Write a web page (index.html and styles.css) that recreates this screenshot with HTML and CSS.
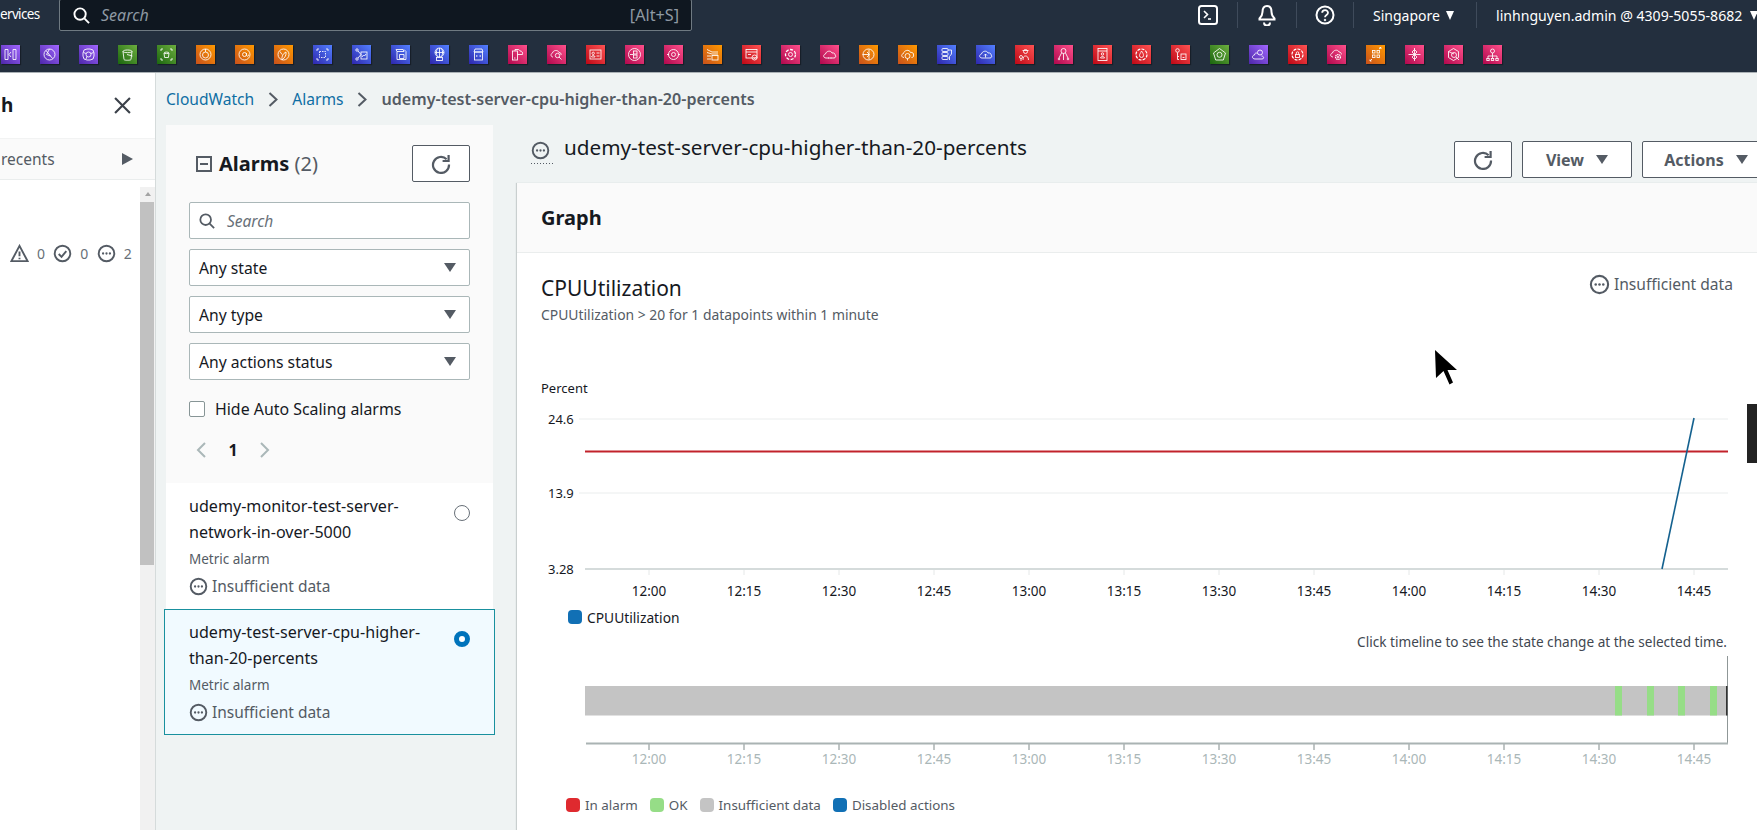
FILE: index.html
```html
<!DOCTYPE html>
<html lang="en">
<head>
<meta charset="utf-8">
<title>CloudWatch Alarms</title>
<link rel="stylesheet" href="styles.css">
</head>
<body>
<svg class="defs" width="0" height="0" aria-hidden="true">
  <symbol id="dots" viewBox="0 0 20 20">
    <circle cx="10" cy="10" r="8.2" fill="none" stroke="currentColor" stroke-width="2"/>
    <circle cx="6.4" cy="10" r="1.2" fill="currentColor"/><circle cx="10" cy="10" r="1.2" fill="currentColor"/><circle cx="13.6" cy="10" r="1.2" fill="currentColor"/>
  </symbol>
  <symbol id="refresh" viewBox="0 0 20 20">
    <path d="M15.6 5.2A8 8 0 1 0 18 10.5" fill="none" stroke="currentColor" stroke-width="2.2"/>
    <path d="M17.6 1v6h-6" fill="none" stroke="currentColor" stroke-width="2.2"/>
  </symbol>
  <symbol id="mag" viewBox="0 0 18 18">
    <circle cx="7.5" cy="7.5" r="6" fill="none" stroke="currentColor" stroke-width="2"/>
    <path d="M12 12l5 5" stroke="currentColor" stroke-width="2"/>
  </symbol>
</svg>

<header class="topnav">
  <div class="nav-row">
    <div class="services"><span>ervices</span></div>
    <div class="nav-search">
      <svg class="nav-mag"><use href="#mag"/></svg>
      <span class="nav-search-text">Search</span>
      <span class="nav-shortcut">[Alt+S]</span>
    </div>
    <div class="nav-item nav-shell">
      <svg width="20" height="20" viewBox="0 0 20 20" fill="none" stroke="#fff" stroke-width="2"><rect x="1" y="1" width="18" height="18" rx="2.5"/><path d="M6 6l3.5 3.5L6 13" stroke-width="1.6"/><path d="M10 14h3" stroke-width="1.6"/></svg>
    </div>
    <div class="nav-item nav-bell">
      <svg width="20" height="22" viewBox="0 0 20 22" fill="none" stroke="#fff" stroke-width="2"><path d="M10 2c-3.500 0-4.500 3-4.500 6 0 3.500-1.500 5-3 6.500v1h15v-1c-1.500-1.500-3-3-3-6.500 0-3-1-6-4.500-6z"/><path d="M7 18.500a3 3 0 0 0 6 0"/></svg>
    </div>
    <div class="nav-item nav-help">
      <svg width="20" height="20" viewBox="0 0 20 20" fill="none" stroke="#fff" stroke-width="2"><circle cx="10" cy="10" r="8.500"/><path d="M7.200 7.800c0-3.500 5.800-3.500 5.800 0 0 2.200-3 2.200-3 4.500" stroke-width="1.800"/><circle cx="10" cy="15" r=".8" fill="#fff" stroke-width="1"/></svg>
    </div>
    <div class="nav-item nav-region"><span>Singapore</span><i class="caret-w"></i></div>
    <div class="nav-item nav-user"><span>linhnguyen.admin @ 4309-5055-8682</span><i class="caret-w"></i></div>
  </div>
  <div class="fav-row">
    <svg class="svc purple" viewBox="0 0 19 19"><path d="M4 4.500h3v10H4zM15 4.500h-3v10h3zM10 7L8 9.500l2 2.500"/></svg>
    <svg class="svc purple" viewBox="0 0 19 19"><circle cx="9.500" cy="9.500" r="5.500"/><path d="M6 5.500l6.500 8M9.500 4l-3 5.500 4 1.500"/></svg>
    <svg class="svc purple" viewBox="0 0 19 19"><rect x="4" y="4" width="11" height="11" rx="4"/><circle cx="9.500" cy="9.500" r="2.500"/><path d="M4.500 7.500l2.500 1M14.500 7.500l-2.500 1M7 14l1-2.500"/></svg>
    <svg class="svc green" viewBox="0 0 19 19"><path d="M5 6.500c0-2 9-2 9 0l-1 8c-.3 1-6.700 1-7 0zM5 6.500c0 1.500 9 1.500 9 0M9 9.500l5.500 1.500"/></svg>
    <svg class="svc green" viewBox="0 0 19 19"><path d="M4 6V4h2M13 4h2v2M15 13v2h-2M6 15H4v-2M7 8c0-1.200 5-1.200 5 0l-.6 4.500H7.600zM7 8c0 .8 5 .8 5 0"/></svg>
    <svg class="svc orange" viewBox="0 0 19 19"><circle cx="9.500" cy="9.500" r="5.500"/><circle cx="9.500" cy="10" r="3"/><path d="M9.500 4v3"/></svg>
    <svg class="svc orange" viewBox="0 0 19 19"><circle cx="9.500" cy="9.500" r="5.500"/><circle cx="9.500" cy="9.500" r="2"/><path d="M11.500 8v2c0 2 2.500 1.500 2.200-.5"/></svg>
    <svg class="svc orange" viewBox="0 0 19 19"><circle cx="9.500" cy="9.500" r="5.500"/><path d="M8 15c-.5-4 1-6.500 4-8 .5 3-1 5.500-4 8zM6 6.500l2 3"/></svg>
    <svg class="svc blue" viewBox="0 0 19 19"><path d="M4 6V4h2M13 4h2v2M15 13v2h-2M6 15H4v-2"/><rect x="6.500" y="6.500" width="6" height="6" stroke-dasharray="1.500 1"/></svg>
    <svg class="svc blue" viewBox="0 0 19 19"><circle cx="5" cy="5" r="1.200"/><circle cx="5" cy="14" r="1.200"/><path d="M6 6l3 3.500-3 3.500"/><rect x="9" y="7" width="6" height="7"/><path d="M10 12l1.500-2 1 1 1.500-2"/></svg>
    <svg class="svc blue" viewBox="0 0 19 19"><path d="M5 4.500h7l1 2H6zM6 6.500v8h9v-8M8.500 9.500h4.500v4H8.500zM13 4.500l2 2"/></svg>
    <svg class="svc blue" viewBox="0 0 19 19"><circle cx="9.500" cy="7.500" r="4.500"/><path d="M5 7.500h9M9.500 3v9M7.500 3.500c-1.500 2.500-1.500 5.500 0 8M11.500 3.500c1.500 2.500 1.500 5.500 0 8"/><rect x="6.500" y="12.500" width="6" height="3"/></svg>
    <svg class="svc blue" viewBox="0 0 19 19"><path d="M5 7l1-3h7l1 3z"/><rect x="5.500" y="7" width="8" height="8"/><path d="M8.300 10l-1 1 1 1M10.700 10l1 1-1 1"/></svg>
    <svg class="svc pink" viewBox="0 0 19 19"><rect x="4.500" y="6" width="5" height="9"/><path d="M7 6V4.500h3c1 0 1.500.5 2 1.500 2 0 3 1.500 2.500 3.500H9.500M6 13h1.500"/></svg>
    <svg class="svc pink" viewBox="0 0 19 19"><path d="M6 12c-2.500 0-2.500-3.500-.5-4 .5-3 5.500-3.500 6.500-.5 1.500 0 2.500 1 2 2.500"/><circle cx="10.500" cy="10.500" r="2.200"/><path d="M12 12l2.500 2.500"/></svg>
    <svg class="svc red" viewBox="0 0 19 19"><rect x="4" y="5" width="11" height="9"/><circle cx="7.200" cy="8.300" r="1.200"/><path d="M5.500 12c0-2 3.500-2 3.500 0zM10.500 8h3M10.500 11h3"/></svg>
    <svg class="svc pink" viewBox="0 0 19 19"><circle cx="9.500" cy="9.500" r="6"/><rect x="8.500" y="6" width="3.500" height="3"/><rect x="8.500" y="10" width="3.500" height="3"/><path d="M5 9.500h3.500"/></svg>
    <svg class="svc pink" viewBox="0 0 19 19"><circle cx="9.500" cy="9.500" r="5"/><circle cx="9.500" cy="9.500" r="2"/><path d="M3 9.500h2M14 9.500h2"/></svg>
    <svg class="svc orange" viewBox="0 0 19 19"><path d="M4 4.500l5 2.500h6M4 7.500L9 9h6M4 11h4"/><rect x="9" y="10.500" width="6" height="4.500"/><path d="M4 14h4"/></svg>
    <svg class="svc red" viewBox="0 0 19 19"><rect x="4" y="4.500" width="11" height="8.500"/><path d="M4 7h11M6 9.500h3"/><circle cx="12.500" cy="12.500" r="2.500"/><path d="M11.500 12.500l1 1 1-1.500"/></svg>
    <svg class="svc pink" viewBox="0 0 19 19"><circle cx="9.500" cy="9.500" r="5" stroke-dasharray="3 1.500" stroke-width="1.300"/><circle cx="9.500" cy="9.500" r="2"/></svg>
    <svg class="svc pink" viewBox="0 0 19 19"><path d="M6 13c-3 0-3-3.500-.5-4 .5-3 5.500-4 6.500-1 2-.5 3.500 1 3 2 1.500 1 .5 3-1 3zM8 13h1M10.500 13h1"/></svg>
    <svg class="svc orange" viewBox="0 0 19 19"><circle cx="9.500" cy="9.500" r="5.500"/><path d="M3.500 9.500h6.500M8 7l2.500 2.500L8 12M10 4.500v10"/></svg>
    <svg class="svc orange" viewBox="0 0 19 19"><path d="M6 12.500c-3 0-3-3.500-.5-4 .5-3.500 6-4.500 7-1 2-.5 3.500 1 3 2.500.5 1.500-.5 2.500-2 2.500"/><circle cx="9.500" cy="11" r="2.500"/><path d="M9.500 13.500v2"/></svg>
    <svg class="svc blue" viewBox="0 0 19 19"><rect x="5" y="3.500" width="6" height="3" rx="1"/><rect x="5" y="7.500" width="6" height="3" rx="1"/><rect x="5" y="11.500" width="6" height="3" rx="1"/><path d="M11 5h3.500v4l-2 2.500V15"/></svg>
    <svg class="svc blue" viewBox="0 0 19 19"><path d="M6 13c-3 0-3-3.500-.5-4 .5-3 5.500-4 6.500-1 2-.5 3.500 1 3 2 1.500 1 .5 3-1 3zM9.500 12.500V9M8 10.500L9.500 9l1.500 1.500"/></svg>
    <svg class="svc red" viewBox="0 0 19 19"><circle cx="10.500" cy="6.500" r="2"/><path d="M7.500 5.500h6M8 15c0-3 1-4 2.500-4s3 1 3 4"/><circle cx="6" cy="12" r="1.500"/><path d="M6 13.500V16"/></svg>
    <svg class="svc pink" viewBox="0 0 19 19"><circle cx="9.500" cy="6" r="2.500"/><path d="M7.500 8L5 13M9.500 8.500V15M11.500 8l2.500 5"/><circle cx="5" cy="14" r=".8"/><circle cx="14" cy="14" r=".8"/></svg>
    <svg class="svc red" viewBox="0 0 19 19"><rect x="5" y="3.500" width="9" height="12"/><path d="M5 6h9"/><circle cx="9.500" cy="9" r="1.200"/><path d="M7.500 13c0-2 4-2 4 0z"/></svg>
    <svg class="svc red" viewBox="0 0 19 19"><circle cx="9.500" cy="9.500" r="5.500" stroke-dasharray="3 1.200" stroke-width="1.200"/><path d="M9.500 6c1.500 2 2 3 2 4.500a2 2 0 0 1-4 0C7.500 9 8.500 8.500 9.500 6z"/></svg>
    <svg class="svc red" viewBox="0 0 19 19"><circle cx="6.500" cy="5.500" r="1.800"/><path d="M6.500 7.500v7H8M6.500 11.500H8"/><rect x="10" y="9" width="5" height="5.500"/><path d="M11.500 12.500h2"/></svg>
    <svg class="svc green" viewBox="0 0 19 19"><path d="M9.500 3.500l6 4.500-2.200 7H5.700L3.500 8z"/><circle cx="9.500" cy="9.800" r="2.500"/></svg>
    <svg class="svc purple" viewBox="0 0 19 19"><path d="M6 14c-3 0-3.500-3.500-.5-4 0-2 2-2.500 3-1.500M12.500 11c2.500 0 3 3 .5 3H6"/><circle cx="11" cy="7.500" r="2.500"/></svg>
    <svg class="svc red" viewBox="0 0 19 19"><circle cx="9.500" cy="9.500" r="5.500" stroke-dasharray="3 1.200" stroke-width="1.200"/><rect x="7.500" y="9.500" width="4" height="3"/><path d="M8.300 9.500V8a1.200 1.200 0 0 1 2.400 0v1.500"/></svg>
    <svg class="svc pink" viewBox="0 0 19 19"><path d="M6 12c-3 0-3-3.500-.5-4 .5-3 5.500-4 6.500-1 1.500 0 2.500 1 2.300 2.500"/><circle cx="11" cy="12" r="2.500" stroke-dasharray="1.500 .6" stroke-width="1.200"/><circle cx="11" cy="12" r=".8"/></svg>
    <svg class="svc orange" viewBox="0 0 19 19"><rect x="6.500" y="5.500" width="2.500" height="2.500"/><rect x="11" y="5.500" width="2.500" height="2.500"/><rect x="6.500" y="10" width="2.500" height="2.500"/><rect x="11" y="10" width="2.500" height="2.500"/><path d="M13 4l2-1.500M13.500 2.500H15V4M6 14l-2 2M4 14.500V16h1.500"/></svg>
    <svg class="svc pink" viewBox="0 0 19 19"><path d="M9.500 3v13M3.500 9.500h12"/><path d="M9.500 4.500l2.500 2.500-2.500 2.500L7 7zM9.500 9.500l2.500 2.500-2.500 2.500L7 12z"/></svg>
    <svg class="svc pink" viewBox="0 0 19 19"><path d="M9.500 3.500l5 3v6l-5 3-5-3v-6z"/><circle cx="10" cy="10" r="2.500"/><path d="M4.500 6.500L10 9M12 12l3 3"/></svg>
    <svg class="svc pink" viewBox="0 0 19 19"><circle cx="9.500" cy="6" r="2"/><path d="M9.500 8v5M5 13.500V11h9v2.500"/><rect x="3.800" y="13.500" width="2.400" height="2"/><rect x="8.300" y="13.500" width="2.400" height="2"/><rect x="12.800" y="13.500" width="2.400" height="2"/></svg>
  </div>
</header>

<div class="page">
  <aside class="side">
    <div class="side-head">
      <span class="side-title">h</span>
      <svg class="side-close" width="17" height="17" viewBox="0 0 16 16" fill="none" stroke="#3b4149" stroke-width="2"><path d="M1 1l14 14M15 1L1 15"/></svg>
    </div>
    <div class="side-recents">
      <span>recents</span>
      <i class="caret-r"></i>
    </div>
    <div class="side-body">
      <div class="side-content">
        <div class="counts">
          <svg class="count-ico" viewBox="0 0 20 20" fill="none" stroke="currentColor" stroke-width="2"><path d="M10 2L1.500 18h17z"/><path d="M10 8v5M10 14.500v1.500"/></svg><span class="count-num">0</span>
          <svg class="count-ico" viewBox="0 0 20 20" fill="none" stroke="currentColor" stroke-width="2"><circle cx="10" cy="10" r="8.200"/><path d="M6 10.500l3 3 5-6"/></svg><span class="count-num">0</span>
          <svg class="count-ico"><use href="#dots"/></svg><span class="count-num">2</span>
        </div>
      </div>
      <div class="scrollbar">
        <div class="scroll-up"><i></i></div>
        <div class="scroll-thumb"></div>
      </div>
    </div>
  </aside>

  <main class="main">
    <nav class="crumbs">
      <a class="crumb-link">CloudWatch</a>
      <svg class="crumb-sep" viewBox="0 0 10 16" fill="none" stroke="#545b64" stroke-width="2"><path d="M1.500 1.500L8.500 8l-7 6.500"/></svg>
      <a class="crumb-link">Alarms</a>
      <svg class="crumb-sep" viewBox="0 0 10 16" fill="none" stroke="#545b64" stroke-width="2"><path d="M1.500 1.500L8.500 8l-7 6.500"/></svg>
      <span class="crumb-cur">udemy-test-server-cpu-higher-than-20-percents</span>
    </nav>
    <div class="columns">
      <section class="alarms">
        <div class="filters">
          <div class="alarms-head">
            <svg class="collapse" width="16" height="16" viewBox="0 0 16 16" fill="none" stroke="#545b64" stroke-width="2"><rect x="1" y="1" width="14" height="14"/><path d="M4 8h8"/></svg>
            <h2 class="alarms-title">Alarms <span class="alarms-count">(2)</span></h2>
            <button class="btn btn-refresh"><svg width="20" height="20"><use href="#refresh"/></svg></button>
          </div>
          <div class="field field-search"><svg class="field-mag"><use href="#mag"/></svg><span>Search</span></div>
          <div class="field sel-state"><span>Any state</span><i class="caret-g"></i></div>
          <div class="field sel-type"><span>Any type</span><i class="caret-g"></i></div>
          <div class="field sel-actions"><span>Any actions status</span><i class="caret-g"></i></div>
          <label class="hide-row"><i class="checkbox"></i><span>Hide Auto Scaling alarms</span></label>
          <div class="pager">
            <svg width="10" height="16" viewBox="0 0 10 16" fill="none" stroke="#aab7b8" stroke-width="2"><path d="M9 1L2 8l7 7"/></svg>
            <b>1</b>
            <svg width="10" height="16" viewBox="0 0 10 16" fill="none" stroke="#aab7b8" stroke-width="2"><path d="M1 1l7 7-7 7"/></svg>
          </div>
        </div>
        <article class="alarm">
          <div class="alarm-text">
            <div class="alarm-name">udemy-monitor-test-server-<br>network-in-over-5000</div>
            <div class="alarm-type">Metric alarm</div>
            <div class="alarm-state"><svg width="19" height="19"><use href="#dots"/></svg>Insufficient data</div>
          </div>
          <i class="radio"></i>
        </article>
        <article class="alarm alarm-on">
          <div class="alarm-text">
            <div class="alarm-name">udemy-test-server-cpu-higher-<br>than-20-percents</div>
            <div class="alarm-type">Metric alarm</div>
            <div class="alarm-state"><svg width="19" height="19"><use href="#dots"/></svg>Insufficient data</div>
          </div>
          <i class="radio radio-on"></i>
        </article>
      </section>

      <section class="detail">
        <div class="detail-head">
          <span class="detail-ico"><svg width="19" height="19"><use href="#dots"/></svg></span>
          <h1 class="detail-title">udemy-test-server-cpu-higher-than-20-percents</h1>
          <div class="detail-btns">
            <button class="btn btn-refresh"><svg width="20" height="20"><use href="#refresh"/></svg></button>
            <button class="btn btn-view">View<i class="caret-g"></i></button>
            <button class="btn btn-actions">Actions<i class="caret-g"></i></button>
          </div>
        </div>
        <div class="panel">
          <div class="panel-head">Graph</div>
          <div class="panel-body">
            <div class="graph-head">
              <div>
                <div class="graph-title">CPUUtilization</div>
                <div class="graph-sub">CPUUtilization &gt; 20 for 1 datapoints within 1 minute</div>
              </div>
              <div class="graph-status"><svg width="21" height="21"><use href="#dots"/></svg>Insufficient data</div>
            </div>
            <svg class="plot" width="1192" height="228" viewBox="541 378 1192 228">
              <text class="ax" x="541" y="392.500">Percent</text>
              <text class="ax" x="548" y="424">24.6</text>
              <text class="ax" x="548" y="498">13.9</text>
              <text class="ax" x="548" y="574">3.28</text>
              <path d="M579 419h1149M579 493h1149" stroke="#eaeded"/>
              <path d="M585 569h1143" stroke="#d5dbdb" stroke-width="2"/>
              <path d="M649 570v5M744 570v5M839 570v5M934 570v5M1029 570v5M1124 570v5M1219 570v5M1314 570v5M1409 570v5M1504 570v5M1599 570v5M1694 570v5" stroke="#e5e8e8"/>
              <path d="M585 451.500h1143" stroke="#c2222b" stroke-width="2"/>
              <path d="M1662 569L1694 418" stroke="#14618f" stroke-width="1.600" fill="none"/>
              <g class="ticks">
                <text x="649" y="596">12:00</text><text x="744" y="596">12:15</text><text x="839" y="596">12:30</text><text x="934" y="596">12:45</text><text x="1029" y="596">13:00</text><text x="1124" y="596">13:15</text><text x="1219" y="596">13:30</text><text x="1314" y="596">13:45</text><text x="1409" y="596">14:00</text><text x="1504" y="596">14:15</text><text x="1599" y="596">14:30</text><text x="1694" y="596">14:45</text>
              </g>
            </svg>
            <div class="legend legend-metric"><span class="legend-item"><i class="sw sw-blue"></i>CPUUtilization</span></div>
            <div class="caption">Click timeline to see the state change at the selected time.</div>
            <svg class="timeline" width="1192" height="116" viewBox="541 654 1192 116">
              <path d="M1727.500 656v88" stroke="#8f9797"/>
              <rect x="585" y="686" width="1142" height="29.500" fill="#c4c4c4"/>
              <rect x="1615" y="686" width="7" height="29.500" fill="#96dd87"/>
              <rect x="1647" y="686" width="7" height="29.500" fill="#96dd87"/>
              <rect x="1678" y="686" width="7" height="29.500" fill="#96dd87"/>
              <rect x="1710" y="686" width="7" height="29.500" fill="#96dd87"/>
              <rect x="1726" y="686" width="1.500" height="29.500" fill="#333"/>
              <path d="M586 743.500h1142" stroke="#aab3b3" stroke-width="2"/>
              <path d="M649 744v6M744 744v6M839 744v6M934 744v6M1029 744v6M1124 744v6M1219 744v6M1314 744v6M1409 744v6M1504 744v6M1599 744v6M1694 744v6" stroke="#aab3b3" stroke-width="1.500"/>
              <g class="ticks ticks-dim">
                <text x="649" y="764">12:00</text><text x="744" y="764">12:15</text><text x="839" y="764">12:30</text><text x="934" y="764">12:45</text><text x="1029" y="764">13:00</text><text x="1124" y="764">13:15</text><text x="1219" y="764">13:30</text><text x="1314" y="764">13:45</text><text x="1409" y="764">14:00</text><text x="1504" y="764">14:15</text><text x="1599" y="764">14:30</text><text x="1694" y="764">14:45</text>
              </g>
            </svg>
            <div class="legend legend-states">
              <span class="legend-item"><i class="sw sw-red"></i>In alarm</span>
              <span class="legend-item"><i class="sw sw-green"></i>OK</span>
              <span class="legend-item"><i class="sw sw-gray"></i>Insufficient data</span>
              <span class="legend-item"><i class="sw sw-blue"></i>Disabled actions</span>
            </div>
          </div>
        </div>
      </section>
    </div>
  </main>
</div>

<div class="edge-tab"></div>
<svg class="cursor" width="24" height="36" viewBox="0 0 24 36"><path d="M0 0l1 28 7.500-7 6 13.500 3.500-2-5.500-12.500H22z" fill="#000"/></svg>
</body>
</html>
```
FILE: styles.css
```css
* { box-sizing: border-box; }
html, body { margin: 0; width: 1757px; height: 830px; overflow: hidden; }
body { font-family: "Noto Sans", "Open Sans", sans-serif; color: #16191f; background: #eff3f3; position: relative; font-size: 15px; }
.defs { position: absolute; }
i { display: block; font-style: normal; }
h1, h2 { margin: 0; font-weight: 400; }

/* top navigation */
.topnav { height: 73px; background: #232f3e; border-bottom: 1px solid #aab1b5; overflow: hidden; }
.nav-row { display: flex; height: 32px; color: #fff; font-size: 14px; width: 1790px; }
.services { width: 40px; display: flex; align-items: center; height: 28px; flex: none; font-size: 13.500px; letter-spacing: -.65px; }
.services span { white-space: nowrap; }
.nav-search { flex: none; width: 633px; height: 32px; margin: -1px 0 0 19px; background: #0f1720; border: 1px solid #6f7a82; border-radius: 2px; display: flex; align-items: center; padding: 0 12px 0 13px; color: #fff; }
.nav-mag { width: 17px; height: 17px; color: #fff; }
.nav-search-text { margin-left: 11px; font-style: italic; color: #8e99a3; font-size: 16px; }
.nav-shortcut { margin-left: auto; color: #8e99a3; font-size: 16.200px; }
.nav-item { height: 26px; margin-top: 2px; display: flex; align-items: center; flex: none; border-left: 1px solid #3f4b5b; }
.nav-shell { border-left: 0; margin-left: 506px; padding-right: 19px; }
.nav-bell, .nav-help { justify-content: center; }
.nav-bell { width: 59px; }
.nav-help { width: 57px; }
.nav-region { width: 123px; padding-left: 19px; }
.nav-region .caret-w { margin-left: 6px; }
.nav-user { padding-left: 19px; font-size: 14.100px; }
.nav-item span { white-space: nowrap; }
.caret-w { width: 0; height: 0; border-left: 4.500px solid transparent; border-right: 4.500px solid transparent; border-top: 9px solid #fff; margin-left: 8px; }

.fav-row { display: flex; gap: 20px; padding: 13px 0 0 1px; width: 1600px; }
.svc { width: 19px; height: 19px; flex: none; fill: none; stroke: #fff; stroke-width: .85; box-shadow: 1px 1px 1px #0005; }
.purple { background: linear-gradient(45deg, #4d27aa, #a166ff); }
.green { background: linear-gradient(45deg, #1b660f, #6cae3e); }
.orange { background: linear-gradient(45deg, #c8511b, #ff9900); }
.blue { background: linear-gradient(45deg, #2e27ad, #527fff); }
.pink { background: linear-gradient(45deg, #b0084d, #ff4f8b); }
.red { background: linear-gradient(45deg, #bd0816, #ff5252); }

/* layout */
.page { display: flex; height: 757px; }

/* sidebar */
.side { width: 156px; flex: none; background: #fff; border-right: 1px solid #d5dbdb; display: flex; flex-direction: column; overflow: hidden; }
.side-head { height: 65px; display: flex; align-items: center; justify-content: space-between; padding: 0 24px 1px 1px; }
.side-title { font-size: 19px; font-weight: 700; }
.side-recents { height: 42px; background: #fafafa; border-top: 1px solid #f2f3f3; border-bottom: 1px solid #eaeded; display: flex; align-items: center; justify-content: space-between; padding: 0 22px 0 1px; color: #545b64; font-size: 15.500px; }
.caret-r { width: 0; height: 0; border-top: 6px solid transparent; border-bottom: 6px solid transparent; border-left: 11px solid #545b64; }
.side-body { flex: 1; display: flex; min-height: 0; }
.side-content { width: 140px; flex: none; }
.counts { display: flex; align-items: center; padding: 64px 0 0 10px; color: #545b64; font-size: 14px; }
.count-ico { width: 19px; height: 19px; flex: none; }
.count-num { width: 25px; padding-left: 8px; color: #687078; }
.scrollbar { width: 15px; margin-top: 7px; background: #f1f1f1; }
.scroll-up { height: 15px; display: flex; justify-content: center; padding-top: 5px; }
.scroll-up i { width: 0; height: 0; border-left: 3.500px solid transparent; border-right: 3.500px solid transparent; border-bottom: 4px solid #a3a3a3; }
.scroll-thumb { height: 363px; width: 14px; background: #c1c1c1; }

/* main */
.main { flex: none; width: 1606px; display: flex; flex-direction: column; }
.crumbs { height: 52px; flex: none; display: flex; align-items: center; padding: 0 0 0 10px; font-size: 15.600px; }
.crumb-link { color: #0e6ea3; }
.crumb-sep { width: 10px; height: 17px; margin: 0 14px 0 14px; }
.crumb-cur { color: #545b64; font-weight: 600; font-size: 16.100px; }
.columns { display: flex; }

.alarms { width: 331px; flex: none; margin-left: 8px; }
.filters { margin: 0 2px; height: 358px; background: #fafafa; padding: 20px 23px 0; }
.alarms-head { display: flex; align-items: center; height: 37px; }
.collapse { margin-left: 7px; flex: none; }
.alarms-title { margin-left: 7px; font-size: 20px; font-weight: 700; }
.alarms-count { color: #545b64; font-weight: 400; }
.btn { font-family: inherit; background: #fff; border: 1px solid #545b64; border-radius: 2px; height: 37px; color: #545b64; font-weight: 700; font-size: 16px; display: flex; align-items: center; justify-content: center; padding: 0; }
.btn-refresh { width: 58px; flex: none; color: #545b64; }
.alarms-head .btn { margin-left: auto; }
.field { display: flex; align-items: center; height: 37px; background: #fff; border: 1px solid #aab7b8; border-radius: 2px; padding: 0 13px 0 9px; font-size: 15.700px; }
.field-search { margin-top: 20px; color: #687078; font-style: italic; font-size: 15.500px; }
.field-mag { width: 16px; height: 16px; color: #545b64; margin-right: 12px; }
.sel-state { margin-top: 10px; }
.sel-type { margin-top: 10px; }
.sel-actions { margin-top: 10px; }
.caret-g { width: 0; height: 0; border-left: 6px solid transparent; border-right: 6px solid transparent; border-top: 9px solid #545b64; margin-left: auto; }
.hide-row { display: flex; align-items: center; margin-top: 20px; font-size: 15.900px; height: 18px; }
.checkbox { width: 16px; height: 16px; background: #fff; border: 1px solid #879596; border-radius: 2px; margin-right: 10px; }
.pager { display: flex; align-items: center; height: 20px; margin-top: 22px; padding-left: 7px; }
.pager b { width: 54px; text-align: center; font-size: 16px; }

.alarm { display: flex; height: 126px; background: #fff; margin: 0 2px; padding: 10px 23px 0; }
.alarm-on { margin: 0; padding: 9px 24px 0 24px; background: #f1faff; border: 1px solid #19909e; }
.alarm-text { flex: 1; min-width: 0; }
.alarm-name { font-size: 16.100px; line-height: 26px; white-space: nowrap; }
.alarm-type { font-size: 13.500px; line-height: 20px; margin-top: 4px; color: #545b64; }
.alarm-state { display: flex; align-items: center; gap: 4px; font-size: 15.500px; line-height: 22px; margin-top: 6px; color: #545b64; }
.radio { width: 16px; height: 16px; border: 1px solid #687078; border-radius: 50%; margin-top: 12px; background: #fff; flex: none; }
.radio-on { border: 5px solid #0073bb; }

.detail { width: 1253px; flex: none; margin-left: 22px; }
.detail-head { height: 58px; display: flex; padding: 0 0 0 14px; }
.detail-ico { height: 39px; width: 23px; padding-top: 16px; color: #545b64; background-image: linear-gradient(90deg, #545b64 50%, transparent 50%); background-size: 3px 1px; background-repeat: repeat-x; background-position: 0 38px; }
.detail-ico svg { display: block; }
.detail-title { margin-left: 10px; font-size: 20.700px; line-height: 28px; margin-top: 8px; white-space: nowrap; }
.detail-btns { margin-left: auto; display: flex; gap: 10px; padding-top: 16px; }
.btn-view { width: 110px; }
.btn-actions { width: 128px; }
.btn .caret-g { margin-left: 12px; }
.panel { box-shadow: -1px 0 1px #c9cfcf; }
.panel-head { height: 70px; background: #fafafa; border-bottom: 1px solid #eaeded; display: flex; align-items: center; padding-left: 24px; font-size: 20px; font-weight: 700; }
.panel-body { height: 577px; background: #fff; padding: 21px 0 0 24px; }
.graph-head { display: flex; justify-content: space-between; width: 1192px; height: 52px; }
.graph-title { font-size: 21px; line-height: 28px; }
.graph-sub { font-size: 13.900px; line-height: 20px; margin-top: 3px; color: #545b64; }
.graph-status { display: flex; align-items: center; gap: 4px; height: 20px; font-size: 15.600px; color: #545b64; }
.plot, .timeline { display: block; margin-top: 52px; }
.timeline { margin-top: 2px; }
.ax { font-size: 13px; fill: #16191f; }
.ticks text { font-size: 13.500px; text-anchor: middle; fill: #16191f; }
.ticks-dim text { fill: #aab7b8; }
.legend { display: flex; align-items: center; height: 24px; font-size: 13.800px; color: #16191f; }
.legend-metric { height: 22px; padding-left: 27px; }
.legend-states { padding-left: 25px; margin-top: 23px; gap: 12px; color: #545b64; font-size: 13.400px; }
.legend-item { display: flex; align-items: center; gap: 5px; }
.sw { width: 14px; height: 14px; border-radius: 4px; }
.sw-blue { background: #1170b5; }
.sw-red { background: #df2a2f; }
.sw-green { background: #96dd87; }
.sw-gray { background: #c4c4c4; }
.caption { width: 1186px; text-align: right; font-size: 13.600px; line-height: 20px; margin-top: 4px; color: #414750; }

/* overlays */
.edge-tab { position: absolute; left: 1747px; top: 404px; width: 10px; height: 59px; background: #232323; }
.cursor { position: absolute; left: 1435px; top: 350px; }
```
